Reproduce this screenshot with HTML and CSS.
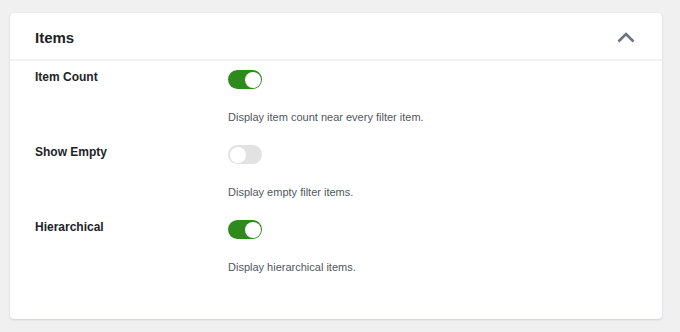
FILE: index.html
```html
<!DOCTYPE html>
<html lang="en">
<head>
    <meta charset="UTF-8">
    <meta name="viewport" content="width=device-width, initial-scale=1.0">
    <title>Filter Settings - Items</title>
    <link rel="stylesheet" href="styles.css">
</head>
<body>
    <div class="panel">
        <!-- Panel header -->
        <div class="panel-header">
            <h2>Items</h2>
            <button class="collapse-btn" aria-label="Collapse">
                <svg width="18" height="11" viewBox="0 0 18 11">
                    <path d="M1.5 9.5 L9 2 L16.5 9.5" fill="none" stroke="#6b7580" stroke-width="2.6"/>
                </svg>
            </button>
        </div>

        <!-- Settings rows -->
        <div class="panel-body">
            <div class="setting">
                <div class="setting-label">Item Count</div>
                <div class="setting-field">
                    <span class="toggle on"></span>
                    <p class="description">Display item count near every filter item.</p>
                </div>
            </div>

            <div class="setting">
                <div class="setting-label">Show Empty</div>
                <div class="setting-field">
                    <span class="toggle"></span>
                    <p class="description">Display empty filter items.</p>
                </div>
            </div>

            <div class="setting">
                <div class="setting-label">Hierarchical</div>
                <div class="setting-field">
                    <span class="toggle on"></span>
                    <p class="description">Display hierarchical items.</p>
                </div>
            </div>
        </div>
    </div>
</body>
</html>
```

FILE: styles.css
```css
/* General styling */
body {
    font-family: 'Liberation Sans', Arial, Helvetica, sans-serif;
    margin: 0;
    padding: 13px 18px 13px 10px;
    background-color: #f0f0f1;
    color: #1d2327;
}

/* Card */
.panel {
    background-color: #fff;
    border-radius: 4px;
    height: 306px;
    box-sizing: border-box;
    box-shadow: 0 1px 2px rgba(120, 130, 160, 0.25), 0 0 1px rgba(0, 0, 0, 0.08);
}

.panel-header {
    display: flex;
    align-items: center;
    justify-content: space-between;
    height: 46px;
    padding: 0 25px;
    border-bottom: 2px solid #f2f2f3;
}

.panel-header h2 {
    margin: 0;
    font-size: 15px;
    font-weight: bold;
    color: #1d2327;
    padding-top: 3px;
}

.collapse-btn {
    background: none;
    border: none;
    padding: 0;
    margin-right: 2px;
    margin-top: 3px;
    cursor: pointer;
    display: flex;
}

/* Rows */
.panel-body {
    padding: 9px 25px 0;
}

.setting {
    display: flex;
    height: 75px;
}

.setting-label {
    width: 193px;
    flex-shrink: 0;
    font-size: 12px;
    font-weight: bold;
    line-height: 14px;
    color: #1d2327;
}

.setting-field {
    display: flex;
    flex-direction: column;
    align-items: flex-start;
}

.description {
    margin: 21px 0 0;
    font-size: 11px;
    line-height: 14px;
    color: #50575e;
}

/* Toggle switch */
.toggle {
    position: relative;
    display: block;
    width: 34px;
    height: 19px;
    border-radius: 10px;
    background-color: #e2e2e2;
    cursor: pointer;
}

.toggle::after {
    content: '';
    position: absolute;
    top: 1.5px;
    left: 1.5px;
    width: 16px;
    height: 16px;
    border-radius: 50%;
    background-color: #fff;
}

.toggle.on {
    background-color: #2e8a1d;
}

.toggle.on::after {
    left: 16.5px;
}
```
